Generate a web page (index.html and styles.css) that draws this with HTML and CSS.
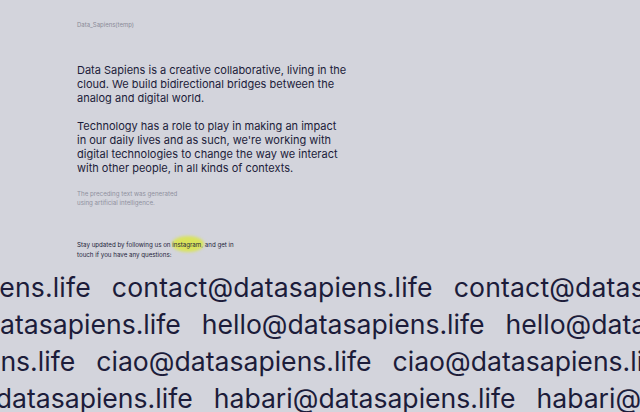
FILE: index.html
```html
<!DOCTYPE html>
<html lang="en">

<head>
  <title>Data Sapiens</title>
  <meta charset="utf-8">
  <link rel="stylesheet" href="styles.css">
</head>

<body>
  <main class="intro">
    <p class="stamp">Data_Sapiens(temp)</p>
    <p class="lead">Data Sapiens is a creative collaborative, living in the cloud. We build bidirectional bridges between the analog and digital world.</p>
    <p class="lead">Technology has a role to play in making an impact in our daily lives and as such, we're working with digital technologies to change the way we interact with other people, in all kinds of contexts.</p>
    <p class="note">The preceding text was generated<br>using artificial intelligence.</p>
    <p class="follow">Stay updated by following us on <a class="mark" href="#">instagram</a>, and get in<br>touch if you have any questions:</p>
  </main>
  <section class="mails">
    <div class="row row-contact">
      <span>contact@datasapiens.life</span><span>contact@datasapiens.life</span><span>contact@datasapiens.life</span>
    </div>
    <div class="row row-hello">
      <span>hello@datasapiens.life</span><span>hello@datasapiens.life</span><span>hello@datasapiens.life</span>
    </div>
    <div class="row row-ciao">
      <span>ciao@datasapiens.life</span><span>ciao@datasapiens.life</span><span>ciao@datasapiens.life</span>
    </div>
    <div class="row row-habari">
      <span>habari@datasapiens.life</span><span>habari@datasapiens.life</span><span>habari@datasapiens.life</span>
    </div>
  </section>
</body>

</html>
```

FILE: styles.css
```css
* {
  font-family: Inter, "Liberation Sans", sans-serif;
}

html,
body {
  height: 100%;
}

body {
  margin: 0;
  overflow: hidden;
  background-color: #d3d4dc;
  color: #1c1c3a;
}

p {
  margin: 0;
}

.intro {
  width: 270px;
  padding: 21px 0 0 77px;
}

.stamp {
  font-size: 6px;
  line-height: 8px;
  color: #8a8b98;
  margin-bottom: 34px;
}

.lead {
  font-size: 11px;
  line-height: 14px;
  margin-bottom: 14px;
}

.note {
  font-size: 6.2px;
  line-height: 9px;
  color: #8f909e;
  margin-bottom: 33px;
}

.follow {
  font-size: 6.2px;
  line-height: 9.5px;
  white-space: nowrap;
}

.mark {
  position: relative;
  z-index: 0;
  color: inherit;
  text-decoration: none;
}

.mark::before {
  content: "";
  position: absolute;
  z-index: -1;
  left: 0;
  right: -3px;
  top: -5px;
  bottom: -4px;
  border-radius: 50%;
  background-color: #d9e35c;
  filter: blur(1.5px);
}

.mails {
  margin-top: 10px;
}

.row {
  display: flex;
  gap: 21px;
  height: 37px;
  font-size: 26.6px;
  line-height: 37px;
  white-space: nowrap;
}

.row span {
  flex: none;
}

.row-contact {
  margin-left: -230px;
  letter-spacing: 0.15px;
}

.row-hello {
  margin-left: -102px;
}

.row-ciao {
  margin-left: -200px;
}

.row-habari {
  margin-left: -109px;
}
```
